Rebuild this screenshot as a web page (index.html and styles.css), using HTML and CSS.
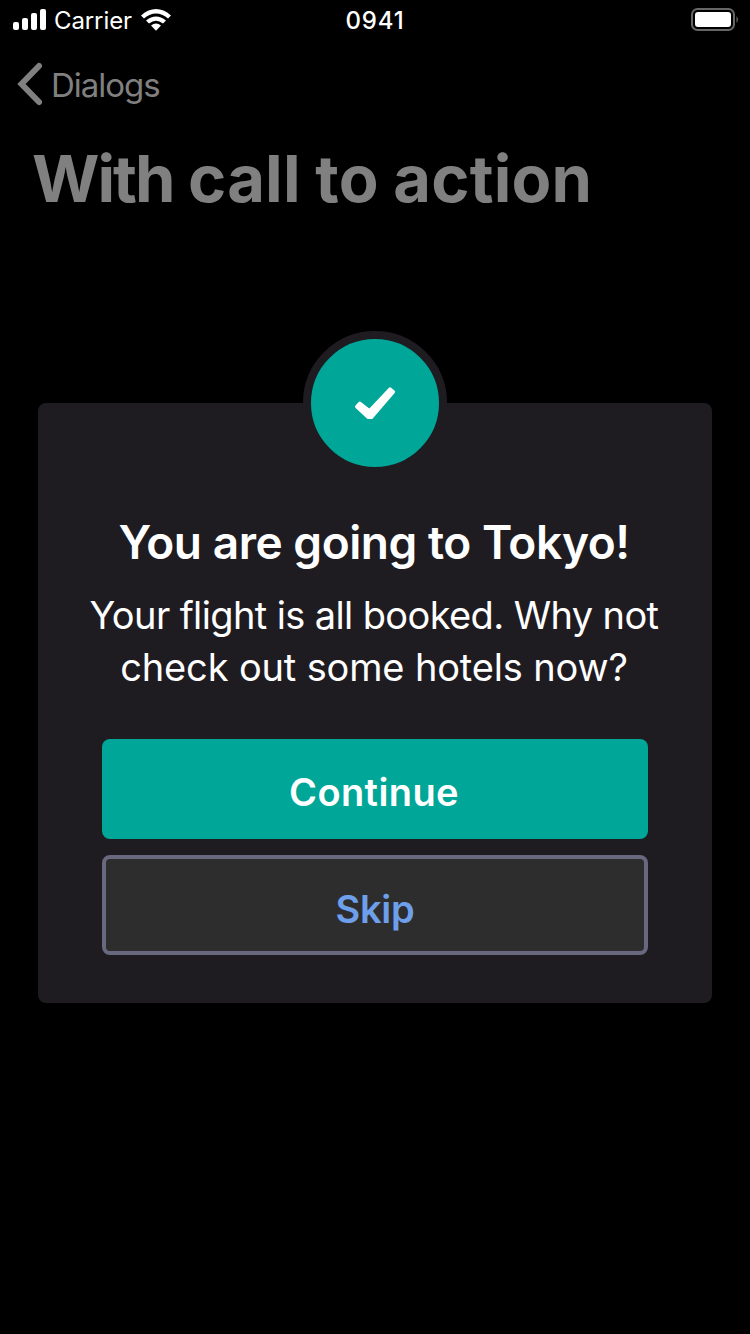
FILE: index.html
```html
<!DOCTYPE html>
<html lang="en">
<head>
<meta charset="utf-8">
<title>With call to action</title>
<link rel="stylesheet" href="styles.css">
</head>
<body>
<div class="screen">
  <header class="status">
    <div class="status-left">
      <svg class="signal" width="34" height="22" viewBox="0 0 34 22"><rect x="0" y="13" width="6" height="8" rx="2"/><rect x="9" y="9" width="6" height="12" rx="2"/><rect x="18" y="4" width="6" height="17" rx="2"/><rect x="27" y="0" width="6" height="21" rx="2"/></svg>
      <span class="carrier">Carrier</span>
      <svg class="wifi" width="30" height="22" viewBox="0 0 30 22"><path d="M0 6.400Q15-6.400 30 6.400L27 9.400Q15-.6 3 9.400Z"/><path d="M5 11.600Q15 3.200 25 11.600L22 14.600Q15 8.800 8 14.600Z"/><path d="M10 16.600Q15 12.400 20 16.600L15 21.800Z"/></svg>
    </div>
    <span class="time">0941</span>
    <svg class="battery" width="48" height="24" viewBox="0 0 48 24"><rect x="1" y="1" width="42" height="21" rx="5.5" fill="none" stroke="#666" stroke-width="2"/><rect x="4" y="4" width="36" height="15" rx="3" fill="#fff"/><path d="M45.5 8Q48.500 11.500 45.500 15Z" fill="#666"/></svg>
  </header>
  <nav class="nav">
    <svg class="back" width="26" height="44" viewBox="0 0 26 44"><path d="M23 4 5.500 22 23 40" fill="none" stroke="#808080" stroke-width="6" stroke-linecap="round" stroke-linejoin="miter"/></svg>
    <span class="back-label">Dialogs</span>
  </nav>
  <h1 class="title"><span class="title-lead">With</span> call to action</h1>
  <main class="dialog">
    <div class="badge">
      <svg width="42" height="34" viewBox="0 0 42 34"><path d="M36 3.200 39.300 5.900 17.400 31.300H14.400L2.800 20.700 5.800 17.400 15.500 25Z" fill="#fff" stroke="#fff" stroke-width="3.600" stroke-linejoin="round"/></svg>
    </div>
    <h2 class="heading">You are going to Tokyo!</h2>
    <p class="message"><span class="line line-one">Your flight is all booked. Why not</span> <span class="line line-two">check out some hotels now?</span></p>
    <div class="actions">
      <button class="button primary">Continue</button>
      <button class="button secondary">Skip</button>
    </div>
  </main>
</div>
</body>
</html>
```
FILE: styles.css
```css
* { box-sizing: border-box; }
body { margin: 0; background: #000; }
.screen {
  width: 750px;
  height: 1334px;
  display: flex;
  flex-direction: column;
  background: #000;
  color: #fff;
  font-family: Inter, "Liberation Sans", sans-serif;
  overflow: hidden;
}
svg { display: block; flex: none; }
.status {
  height: 40px;
  display: grid;
  grid-template-columns: 1fr auto 1fr;
  align-items: center;
  padding: 0 11px 0 13px;
}
.status-left { display: flex; align-items: center; }
.signal, .wifi { fill: #fff; }
.carrier { width: 78px; margin: 2px 0 0 7px; font-size: 24px; line-height: 30px; letter-spacing: -0.1px; white-space: nowrap; }
.wifi { margin-left: 9px; }
.time { margin: 2px 2px 0 0; font-size: 24px; line-height: 30px; font-weight: 500; letter-spacing: 0.8px; }
.battery { justify-self: end; }
.nav {
  height: 88px;
  display: flex;
  align-items: center;
  padding-left: 16px;
  color: #808080;
}
.back-label { margin: 1px 0 0 9px; font-size: 33px; line-height: 40px; font-weight: 400; letter-spacing: -1px; }
.title {
  margin: 11px 0 0 32px;
  font-size: 65px;
  line-height: 80px;
  font-weight: 700;
  letter-spacing: 0.2px;
  word-spacing: -1px;
  color: #808080;
  white-space: nowrap;
}
.title-lead { letter-spacing: -2px; }
.dialog {
  width: 674px;
  height: 600px;
  margin: 184px auto 0;
  border-radius: 8px;
  background: #1f1c21;
  display: flex;
  flex-direction: column;
  align-items: center;
}
.badge {
  width: 144px;
  height: 144px;
  flex: none;
  margin-top: -72px;
  border: 8px solid #1f1c21;
  border-radius: 50%;
  background: #00a698;
  display: flex;
  align-items: center;
  justify-content: center;
}
.heading {
  margin: 39px 2px 0 0;
  font-size: 46px;
  line-height: 56px;
  font-weight: 600;
  letter-spacing: -0.45px;
  white-space: nowrap;
}
.message {
  margin: 19px 2px 0 0;
  font-size: 38px;
  line-height: 52px;
  font-weight: 400;
  text-align: center;
}
.line { display: block; white-space: nowrap; }
.line-one { letter-spacing: -0.62px; }
.line-two { letter-spacing: -0.15px; }
.actions {
  width: 546px;
  margin-top: 46px;
  display: grid;
  gap: 16px;
}
.button {
  height: 100px;
  padding: 7px 0 0;
  border: 0;
  border-radius: 8px;
  font-family: inherit;
  font-size: 38px;
  line-height: 48px;
  font-weight: 600;
  color: #fff;
}
.primary { padding: 6px 2px 0 0; background: #00a698; letter-spacing: 0.4px; }
.secondary { border: 4px solid #68697f; background: #2d2d2e; color: #6d9feb; letter-spacing: -0.3px; }
```
